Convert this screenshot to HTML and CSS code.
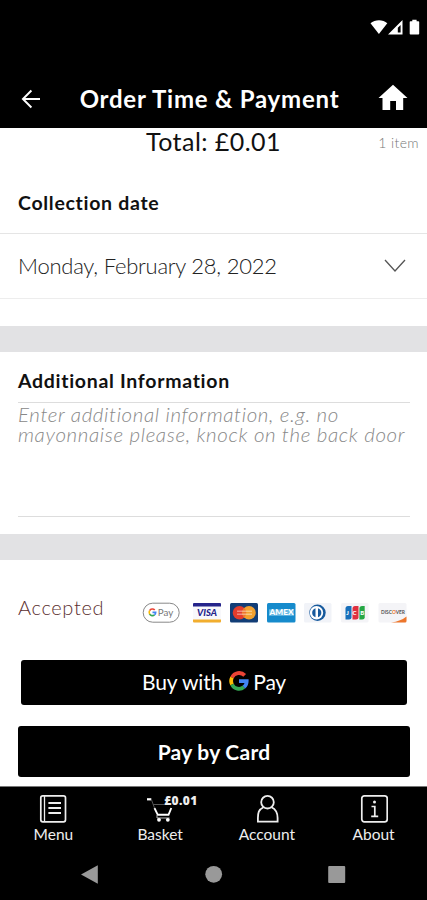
FILE: index.html
```html
<!DOCTYPE html>
<html lang="en">
<head>
<meta charset="utf-8">
<title>Order Time &amp; Payment</title>
<link rel="stylesheet" href="styles.css">
</head>
<body>
<div class="screen">
  <div class="status">
    <svg width="50" height="18" viewBox="0 0 50 18" fill="#fff">
      <path d="M0.5 5.2C5 1.2 13 1.2 17.3 5.2L8.9 16Z"/>
      <path fill-rule="evenodd" d="M18 16.6L32.5 2V16.6ZM27.8 9.8V14.6H30.6V7Z"/>
      <path d="M40.5 3.2H42.3V1.7H46.6V3.2H48.4Q49.2 3.2 49.2 4V15.8Q49.2 16.6 48.4 16.6H40.5Q39.7 16.6 39.7 15.8V4Q39.7 3.2 40.5 3.2Z"/>
    </svg>
  </div>
  <header class="header">
    <svg class="back" width="20" height="20" viewBox="0 0 20 20" fill="none" stroke="#fff" stroke-width="1.9"><path d="M19 10H2M10.4 1.5L1.9 10L10.4 18.5"/></svg>
    <h1 class="title">Order Time &amp; Payment</h1>
    <svg class="home" width="30" height="27" viewBox="0 0 30 27" fill="#fff"><path d="M15 .8L29.5 14H25.2V26H18V17H12.2V26H4.5V14H.5Z"/></svg>
  </header>
  <main>
    <div class="total-row"><span></span><span class="total">Total: £0.01</span><span class="count">1 item</span></div>
    <h2 class="heading">Collection date</h2>
    <div class="date-row">
      <span class="date">Monday, February 28, 2022</span>
      <svg width="22" height="14" viewBox="0 0 22 14" fill="none" stroke="#555" stroke-width="1.3"><path d="M1 1L11 12L21 1"/></svg>
    </div>
    <div class="divider first"></div>
    <section class="info">
      <h2 class="heading info-heading">Additional Information</h2>
      <div class="notes"><span>Enter additional information, e.g. no</span><br><span>mayonnaise please, knock on the back door</span></div>
    </section>
    <div class="divider"></div>
    <section class="payment">
      <div class="accepted-row">
        <span class="accepted">Accepted</span>
        <svg class="cards" width="268" height="24" viewBox="0 0 268 24" font-family="Lato, sans-serif">
          <rect x="1.2" y="2.2" width="36" height="19" rx="9.5" fill="#fff" stroke="#888" stroke-width="1"/>
          <g transform="translate(6.3 7.2) scale(.42)" fill="none" stroke-width="4">
            <path d="M15.3 4.4A7.5 7.5 0 0 0 3.2 5.8" stroke="#ea4335"/><path d="M3.2 5.8A7.5 7.5 0 0 0 3.2 14.2" stroke="#fbbc04"/><path d="M3.2 14.2A7.5 7.5 0 0 0 14.7 15.8" stroke="#34a853"/><path d="M14.7 15.8A7.5 7.5 0 0 0 17.5 10H10" stroke="#4285f4"/>
          </g>
          <text x="15.7" y="15.1" font-size="10" fill="#777" textLength="15.5" lengthAdjust="spacingAndGlyphs">Pay</text>

          <rect x="51" y="2" width="28" height="19.5" rx="1" fill="#f8f8fb"/>
          <path d="M51 3Q51 2 52 2H78Q79 2 79 3V5.5H51Z" fill="#25248b"/><path d="M51 18.5H79V20.5Q79 21.5 78 21.5H52Q51 21.5 51 20.5Z" fill="#f2ae2e"/>
          <text x="55" y="15.3" font-size="9" font-weight="900" font-style="italic" fill="#25248b" textLength="20" lengthAdjust="spacingAndGlyphs">VISA</text>

          <rect x="88" y="2" width="28" height="19.5" rx="1.5" fill="#123d76"/>
          <circle cx="97.5" cy="11.7" r="6.8" fill="#e43d2d"/><circle cx="107" cy="11.7" r="6.8" fill="#f3a12e"/><path d="M102.2 6.8A6.8 6.8 0 0 1 102.2 16.6A6.8 6.8 0 0 1 102.2 6.8Z" fill="#ee762b"/><path d="M95 10.3H110M95 13.2H110" stroke="#fff" stroke-opacity=".4" stroke-width="1.4"/>

          <rect x="125" y="2" width="28.5" height="19.5" rx="1.5" fill="#168bcc"/>
          <rect x="127" y="8.4" width="25" height="6.4" fill="#6bbbe4"/>
          <text x="127.5" y="14" font-size="6.6" font-weight="900" fill="#fff" textLength="24" lengthAdjust="spacingAndGlyphs">AMEX</text>

          <rect x="162" y="2" width="27.5" height="19.5" rx="1.5" fill="#f1f3f8"/>
          <circle cx="175.5" cy="11.7" r="8.2" fill="#175a9d"/><circle cx="174.5" cy="11.7" r="6.7" fill="#fff"/><path d="M173.5 7.2A4.7 4.7 0 0 0 173.5 16.2ZM176 7.2A4.7 4.7 0 0 1 176 16.2Z" fill="#175a9d"/>

          <rect x="199" y="2" width="27.5" height="19.5" rx="1.5" fill="#f4f4f7"/>
          <path d="M206 5H209.5V16.5Q209.5 18.5 207 18.5H203.5V7.5Q203.5 5 206 5Z" fill="#176fba"/><path d="M213 5H216.5V16.5Q216.5 18.5 214 18.5H210.5V7.5Q210.5 5 213 5Z" fill="#df3140"/><path d="M220 5H222.7V16.5Q222.7 18.5 220.2 18.5H217.4V7.5Q217.4 5 220 5Z" fill="#25a744"/>
          <text x="204.3" y="14" font-size="6" font-weight="900" fill="#fff" textLength="18" lengthAdjust="spacing">JCB</text>

          <rect x="236.5" y="2" width="28" height="19.5" rx="1.5" fill="#f4f4f7"/>
          <text x="239" y="13.3" font-size="5.6" font-weight="700" fill="#555" textLength="24" lengthAdjust="spacingAndGlyphs">DISC<tspan fill="#ed762c">O</tspan>VER</text>
          <path d="M264.5 15.5V20Q264.5 21.5 263 21.5H249Q259 20.2 264.5 15.5Z" fill="#ed762c"/>
        </svg>
      </div>
      <button class="btn gpay"><span class="buy">Buy with</span>
        <svg class="g" width="20" height="20" viewBox="0 0 20 20" fill="none" stroke-width="3.8">
          <path d="M15.7 4.4A7.8 7.8 0 0 0 3 6.5" stroke="#ea4335"/><path d="M3 6.5A7.8 7.8 0 0 0 3 13.5" stroke="#fbbc04"/><path d="M3 13.5A7.8 7.8 0 0 0 14.9 16.1" stroke="#34a853"/><path d="M14.9 16.1A7.8 7.8 0 0 0 17.7 10.1H10" stroke="#4285f4"/>
        </svg><span class="pay">Pay</span></button>
      <button class="btn card"><span>Pay by Card</span></button>
    </section>
  </main>
  <nav class="tabs">
    <div class="tab">
      <svg width="28" height="30" viewBox="0 0 28 30" fill="none" stroke="#eee" stroke-width="1.7"><rect x="1.8" y="1.8" width="24.7" height="26" rx="2"/><path d="M5.5 2V28" stroke-width="1.3"/><path d="M9.4 9H22M9.4 14H22M9.4 19H22" stroke-width="1.9"/></svg>
      <span>Menu</span>
    </div>
    <div class="tab">
      <span class="basket"><svg width="28" height="30" viewBox="0 0 28 30" fill="none" stroke="#fff"><path d="M1 5.3H5.3" stroke-width="2.2"/><path d="M5.3 5.3L8.5 14M7 10.5H24" stroke="#555" stroke-width="1"/><path d="M8.5 14.2L11.8 20.8H22.5L25.3 14" stroke-width="1.9"/><path d="M11 21V24H23.5" stroke="#bbb" stroke-width="1"/><circle cx="13" cy="25.8" r="1.9" fill="#fff" stroke="none"/><circle cx="21.8" cy="25.8" r="1.9" fill="#fff" stroke="none"/></svg><b class="badge">£0.01</b></span>
      <span>Basket</span>
    </div>
    <div class="tab">
      <svg width="28" height="30" viewBox="0 0 28 30" fill="none" stroke="#eee" stroke-width="1.8"><circle cx="14.5" cy="8.2" r="6.3"/><path d="M10.5 13.2C5.5 15.5 4.9 19 4.9 24V27.6H24.6V24C24.6 19 23.5 15.5 18.5 13.2"/></svg>
      <span>Account</span>
    </div>
    <div class="tab">
      <svg width="28" height="30" viewBox="0 0 28 30" fill="none" stroke="#eee" stroke-width="1.7"><rect x="1.8" y="1.8" width="25.4" height="26" rx="2.5"/><path d="M11.5 12.5H14.8V22M11.2 22.3H18.2"/><circle cx="14.5" cy="8" r="1.5" fill="#eee" stroke="none"/></svg>
      <span>About</span>
    </div>
  </nav>
  <div class="sysnav">
    <svg width="427" height="52" viewBox="0 0 427 52" fill="#999"><path d="M97.8 17.3V35.7L81 26.5Z"/><circle cx="213.7" cy="26.3" r="8.4"/><rect x="328.2" y="18" width="17" height="17" rx="1"/></svg>
  </div>
</div>
</body>
</html>
```

FILE: styles.css
```css
* { box-sizing: border-box; }
body { margin: 0; background: #fff; font-family: Lato, sans-serif; color: #111; }
.screen { width: 427px; height: 900px; overflow: hidden; display: flex; flex-direction: column; background: #fff; }
h1, h2 { margin: 0; font-weight: 700; }
span, b { white-space: nowrap; }
svg { display: block; flex: none; }
.status { height: 68px; background: #000; display: flex; justify-content: flex-end; padding: 18px 7px 0 0; flex: none; }
.header { height: 60px; background: #000; color: #fff; display: flex; align-items: center; flex: none; padding: 0 19px 0 21px; }
.back { margin-top: 1px; }
.title { flex: 1; text-align: center; font-size: 24px; line-height: 30px; letter-spacing: .77px; padding-top: 1px; }
.home { margin-top: -1px; }
main { height: 658px; flex: none; }
.total-row { height: 43px; display: grid; grid-template-columns: 1fr auto 1fr; padding: 0 8px; }
.total { font-size: 25px; line-height: 27px; letter-spacing: .45px; }
.count { font-size: 14px; line-height: 30px; text-align: right; color: #777; letter-spacing: .4px; font-weight: 300; }
.heading { font-size: 19.5px; line-height: 24px; padding: 20px 18px 18px; letter-spacing: .7px; }
.date-row { height: 66px; border-top: 1.5px solid #e5e5e5; border-bottom: 1.5px solid #ededed; display: flex; align-items: center; justify-content: space-between; padding: 0 21px 0 18px; }
.date { font-size: 22px; font-weight: 300; color: #222; letter-spacing: -.24px; margin-top: -2px; }
.divider { height: 26px; background: #e2e2e4; }
.divider.first { margin-top: 27px; }
.info { height: 182px; padding: 0 17px 0 18px; }
.info-heading { padding: 17px 0 9px; }
.notes { height: 115px; border-top: 1.5px solid #ddd; border-bottom: 1.5px solid #ddd; font-style: italic; font-weight: 300; color: #888; font-size: 20.5px; line-height: 20px; letter-spacing: .63px; padding-top: 1px; }
.payment { display: flex; flex-direction: column; }
.accepted-row { height: 100px; display: flex; align-items: center; justify-content: space-between; padding: 0 17px 5px 18px; }
.accepted { font-size: 20px; font-weight: 300; color: #5c3030; letter-spacing: .65px; margin-top: -2px; }
.cards { margin: 10px 0 0; }
.btn { font-family: inherit; border: 0; padding: 0; background: #000; color: #fff; border-radius: 3px; display: flex; align-items: center; justify-content: center; }
.gpay { margin: 0 20px 0 21px; height: 45px; font-size: 21px; }
.gpay span { margin-top: -2px; }
.buy { letter-spacing: -.1px; }
.pay { letter-spacing: -.2px; }
.g { margin: -4px 4px 0 7px; }
.card { margin: 21px 17px 0 18px; height: 51px; font-size: 21px; font-weight: 700; letter-spacing: .25px; }
.tabs { height: 62px; border-top: 1.5px solid #777; background: #000; color: #eee; display: grid; grid-template-columns: repeat(4, 1fr); flex: none; }
.tab { display: flex; flex-direction: column; align-items: center; padding-top: 7px; font-size: 15.5px; line-height: 21px; }
.basket { position: relative; }
.badge { position: absolute; left: 18px; top: -1px; font-family: "Open Sans", sans-serif; font-size: 12px; font-weight: 800; line-height: 15px; letter-spacing: .4px; }
.sysnav { height: 52px; background: #000; flex: none; }
```
